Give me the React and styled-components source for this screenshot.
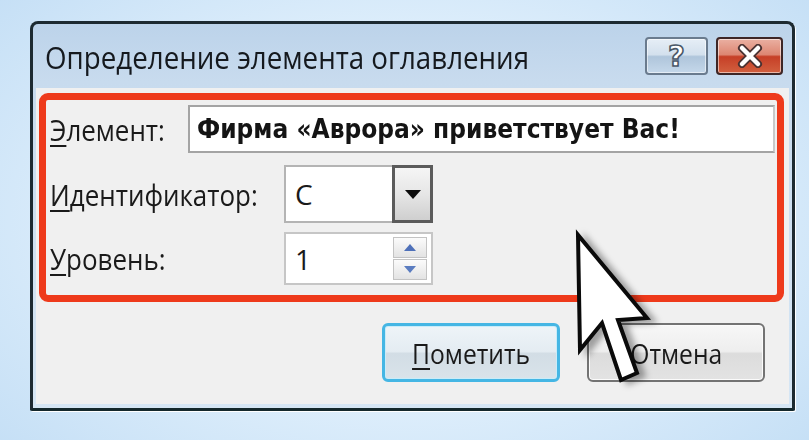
import React from "react";
import styled, { createGlobalStyle } from "styled-components";

const Global = createGlobalStyle`
  html, body { margin: 0; padding: 0; }
  body {
    width: 809px;
    height: 440px;
    overflow: hidden;
    background: radial-gradient(ellipse 70% 80% at 50% 50%, #f1f8fe 0%, #dcedfb 55%, #c3def5 100%);
    font-family: "Open Sans", "Noto Sans", sans-serif;
  }
`;

const Stage = styled.div`
  position: relative;
  width: 809px;
  height: 440px;
  box-sizing: border-box;
  padding: 21px 0 0 30px;
`;

const Dialog = styled.div`
  width: 765px;
  height: 390px;
  box-sizing: border-box;
  border: 3px solid #1d2a31;
  border-bottom-color: #14282c;
  border-radius: 8px 8px 2px 2px;
  background: linear-gradient(#bcd3ea 0%, #c8dbee 15%, #d6e6f4 100%);
  display: flex;
  flex-direction: column;
  box-shadow: 1px 1px 0 #ffffff;
`;

const TitleBar = styled.div`
  height: 64px;
  display: flex;
  align-items: center;
  gap: 8px;
  padding: 0 9px 0 12px;
`;

const Title = styled.div`
  flex: 1;
  font-size: 31.5px;
  color: #15191e;
  white-space: nowrap;
`;

const Squeeze = styled.span`
  display: inline-block;
  white-space: nowrap;
  transform: scaleX(${(p) => p.$k || 0.88});
  transform-origin: ${(p) => p.$origin || "left center"};
`;

const CaptionButton = styled.div`
  width: ${(p) => p.$w}px;
  height: 38px;
  box-sizing: border-box;
  border-radius: 4px;
  border: 2px solid ${(p) => (p.$close ? "#3e2626" : "#6a7b8e")};
  background: ${(p) =>
    p.$close
      ? "linear-gradient(#eab0a2 0%, #dd8672 46%, #c63f27 52%, #d2603f 100%)"
      : "linear-gradient(#e6eef6 0%, #d3e0ed 46%, #afc5db 52%, #c5d8ea 100%)"};
  display: flex;
  align-items: center;
  justify-content: center;
  box-shadow: inset 0 0 0 1px rgba(255, 255, 255, 0.55);
`;

const Question = styled.span`
  font-family: "DejaVu Sans", sans-serif;
  font-weight: 700;
  font-size: 29px;
  line-height: 1;
  color: #ffffff;
  -webkit-text-stroke: 1.6px #4a5868;
`;

const Client = styled.div`
  flex: 1;
  margin: 0 3px 4px 3px;
  background: #f0f0f0;
  padding: 5px 5px 0 3px;
  display: flex;
  flex-direction: column;
`;

const Highlight = styled.div`
  height: 209px;
  box-sizing: border-box;
  border: 7px solid #ee3a1b;
  border-radius: 9px;
  padding: 5px 2px 0 4px;
  display: flex;
  flex-direction: column;
`;

const Row = styled.div`
  display: flex;
  align-items: center;
  height: ${(p) => p.$h}px;
  margin-bottom: ${(p) => p.$mb || 0}px;
`;

const Label = styled.div`
  width: ${(p) => p.$w}px;
  flex: none;
  font-size: 29.5px;
  color: #1a1a1a;
  u { text-decoration-thickness: 2px; text-underline-offset: 4px; }
`;

const TextInput = styled.div`
  flex: none;
  width: 587px;
  height: 100%;
  box-sizing: border-box;
  background: #ffffff;
  border: 2px solid #a4a4a4;
  border-right-color: #c9c9c9;
  display: flex;
  align-items: center;
  padding-left: 7px;
  font-family: "DejaVu Sans", sans-serif;
  font-weight: 700;
  font-size: 26px;
  color: #141414;
`;

const Combo = styled.div`
  flex: none;
  width: 149px;
  height: 100%;
  box-sizing: border-box;
  display: flex;
  background: #ffffff;
  border: 2px solid #b4b4b4;
`;

const Value = styled.div`
  flex: 1;
  display: flex;
  align-items: center;
  padding-left: 9px;
  font-size: 28px;
  color: #1a1a1a;
`;

const DropButton = styled.div`
  width: 41px;
  margin: -2px -2px -2px 0;
  box-sizing: border-box;
  border: 3px solid #5b5b5b;
  background: linear-gradient(#f5f5f5 0%, #e6e6e6 50%, #cfcfcf 100%);
  display: flex;
  align-items: center;
  justify-content: center;
`;

const DownTriangle = styled.div`
  width: 0;
  height: 0;
  border-left: 8px solid transparent;
  border-right: 8px solid transparent;
  border-top: 9px solid #0c0c0c;
`;

const Spin = styled.div`
  flex: none;
  width: 149px;
  height: 100%;
  box-sizing: border-box;
  display: flex;
  background: #ffffff;
  border: 2px solid #c6c6c6;
`;

const SpinButtons = styled.div`
  width: 34px;
  margin: 3px 4px 3px 0;
  display: flex;
  flex-direction: column;
  gap: 1px;
`;

const SpinButton = styled.div`
  flex: 1;
  box-sizing: border-box;
  border: 1px solid #c3c3c3;
  background: linear-gradient(#fbfbfb, #e3e3e3);
  display: flex;
  align-items: center;
  justify-content: center;
`;

const Arrow = styled.div`
  width: 0;
  height: 0;
  border-left: 6px solid transparent;
  border-right: 6px solid transparent;
  ${(p) =>
    p.$up
      ? "border-bottom: 7px solid #4e70b9;"
      : "border-top: 7px solid #5a7cc0;"}
`;

const ButtonRow = styled.div`
  display: flex;
  justify-content: flex-end;
  gap: 27px;
  margin-top: 21px;
  padding-right: 19px;
`;

const Button = styled.div`
  width: 178px;
  height: 59px;
  box-sizing: border-box;
  border-radius: 6px;
  border: ${(p) => (p.$focus ? "3px solid #45b6e4" : "2px solid #737373")};
  background: ${(p) =>
    p.$focus
      ? "linear-gradient(#eef4f8 0%, #e4ecf2 48%, #d2dde5 52%, #d9e3ea 100%)"
      : "linear-gradient(#f7f7f7 0%, #eeeeee 48%, #dcdcdc 52%, #e3e3e3 100%)"};
  box-shadow: inset 0 0 0 1px ${(p) => (p.$focus ? "#c9ecf9" : "#fbfbfb")};
  display: flex;
  align-items: center;
  justify-content: center;
  font-size: 28px;
  color: #1a1a1a;
  u { text-decoration-thickness: 2px; text-underline-offset: 4px; }
`;

const Cursor = styled.svg`
  position: absolute;
  left: 560px;
  top: 225px;
  filter: drop-shadow(7px 3px 3px rgba(0, 0, 0, 0.35));
`;

export default function App() {
  return (
    <>
      <Global />
      <Stage>
        <Dialog>
          <TitleBar>
            <Title>
              <Squeeze>Определение элемента оглавления</Squeeze>
            </Title>
            <CaptionButton $w={63}>
              <Question>?</Question>
            </CaptionButton>
            <CaptionButton $w={67} $close>
              <svg width="30" height="24" viewBox="0 0 30 24">
                <path d="M7 4 L23 20 M23 4 L7 20" stroke="#4a3232" strokeWidth="8" strokeLinecap="round" />
                <path d="M7 4 L23 20 M23 4 L7 20" stroke="#ffffff" strokeWidth="4.5" strokeLinecap="round" />
              </svg>
            </CaptionButton>
          </TitleBar>
          <Client>
            <Highlight>
              <Row $h={48} $mb={12}>
                <Label $w={138}>
                  <Squeeze><u>Э</u>лемент:</Squeeze>
                </Label>
                <TextInput>
                  <Squeeze $k={0.9}>Фирма «Аврора» приветствует Вас!</Squeeze>
                </TextInput>
              </Row>
              <Row $h={58} $mb={9}>
                <Label $w={234}>
                  <Squeeze><u>И</u>дентификатор:</Squeeze>
                </Label>
                <Combo>
                  <Value>C</Value>
                  <DropButton>
                    <DownTriangle />
                  </DropButton>
                </Combo>
              </Row>
              <Row $h={53}>
                <Label $w={234}>
                  <Squeeze><u>У</u>ровень:</Squeeze>
                </Label>
                <Spin>
                  <Value>1</Value>
                  <SpinButtons>
                    <SpinButton>
                      <Arrow $up />
                    </SpinButton>
                    <SpinButton>
                      <Arrow />
                    </SpinButton>
                  </SpinButtons>
                </Spin>
              </Row>
            </Highlight>
            <ButtonRow>
              <Button $focus>
                <Squeeze $origin="center"><u>П</u>ометить</Squeeze>
              </Button>
              <Button>
                <Squeeze $origin="center">Отмена</Squeeze>
              </Button>
            </ButtonRow>
          </Client>
        </Dialog>
        <Cursor width="110" height="175" viewBox="0 0 110 175">
          <polygon
            points="18,10 20,125 42,98 61,155 77,148 58,95 87,93"
            fill="#ffffff"
            stroke="#0a0a0a"
            strokeWidth="4"
            strokeLinejoin="miter"
          />
        </Cursor>
      </Stage>
    </>
  );
}
